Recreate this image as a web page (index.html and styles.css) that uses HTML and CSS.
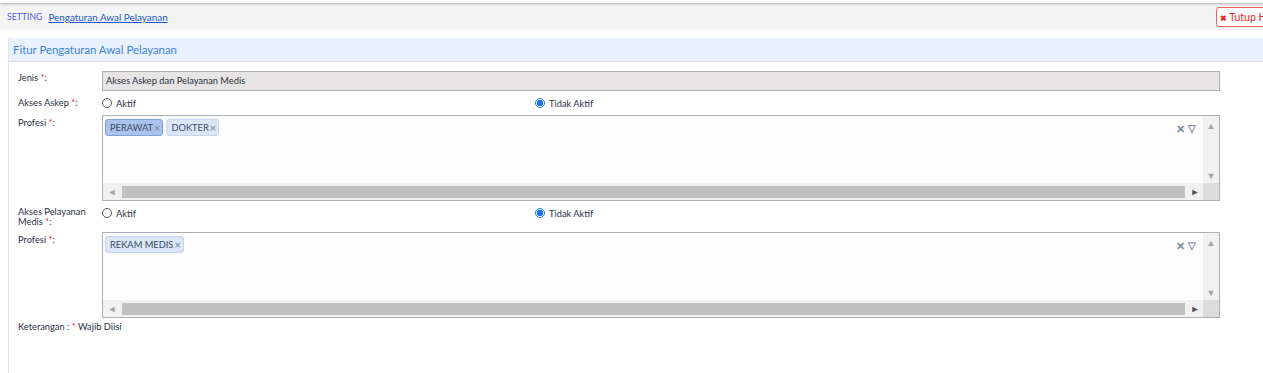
FILE: index.html
```html
<!DOCTYPE html>
<html lang="id">
<head>
  <meta charset="UTF-8">
  <title>Pengaturan Awal Pelayanan</title>
  <link rel="stylesheet" href="styles.css">
</head>
<body>
<div class="page">
  <div class="topline"></div>

  <div class="crumbs">
    <span class="crumb-root">SETTING</span>
    <a class="crumb-link" href="#">Pengaturan Awal Pelayanan</a>
    <button class="btn-close"><span class="ico">✖</span>Tutup Halaman</button>
  </div>

  <section class="panel">
    <h2 class="panel-title">Fitur Pengaturan Awal Pelayanan</h2>

    <div class="form">
      <label class="lbl">Jenis <span class="req">*</span>:</label>
      <div class="input-ro">Akses Askep dan Pelayanan Medis</div>

      <label class="lbl">Akses Askep <span class="req">*</span>:</label>
      <div class="radios">
        <span class="opt"><span class="radio"></span>Aktif</span>
        <span class="opt"><span class="radio on"></span>Tidak Aktif</span>
      </div>

      <label class="lbl lbl-box">Profesi <span class="req">*</span>:</label>
      <div class="multi">
        <div class="multi-body">
          <span class="tag active">PERAWAT<span class="tag-x">×</span></span>
          <span class="tag">DOKTER<span class="tag-x">×</span></span>
          <span class="multi-tools"><span class="clr">✕</span><span class="drop">▽</span></span>
        </div>
        <div class="vscroll"><span>▲</span><span>▼</span></div>
        <div class="hscroll"><span class="arr">◄</span><span class="thumb"></span><span class="arr">►</span></div>
        <div class="corner"></div>
      </div>

      <label class="lbl lbl-two">Akses Pelayanan<br>Medis <span class="req">*</span>:</label>
      <div class="radios">
        <span class="opt"><span class="radio"></span>Aktif</span>
        <span class="opt"><span class="radio on"></span>Tidak Aktif</span>
      </div>

      <label class="lbl lbl-box">Profesi <span class="req">*</span>:</label>
      <div class="multi">
        <div class="multi-body">
          <span class="tag">REKAM MEDIS<span class="tag-x">×</span></span>
          <span class="multi-tools"><span class="clr">✕</span><span class="drop">▽</span></span>
        </div>
        <div class="vscroll"><span>▲</span><span>▼</span></div>
        <div class="hscroll"><span class="arr">◄</span><span class="thumb"></span><span class="arr">►</span></div>
        <div class="corner"></div>
      </div>
    </div>

    <p class="note">Keterangan : <span class="req">*</span> Wajib Diisi</p>
  </section>
</div>
</body>
</html>
```

FILE: styles.css
```css
:root {
  --text: #2b3040;
  --blue: #3d84dd;
  --line: #aab1b9;
  --req: #e52222;
}
* { box-sizing: border-box; }
html, body { overflow: hidden; }
body {
  margin: 0;
  background: #fff;
  font-family: Lato, "Open Sans", sans-serif;
  font-size: 9.3px;
  color: var(--text);
}
.page { width: 1314px; height: 373px; }

.topline {
  height: 3px;
  background: #fff;
  box-shadow: 0 1px 3px rgba(0,0,0,.28);
  position: relative;
  z-index: 1;
}

/* breadcrumb */
.crumbs {
  display: flex;
  align-items: center;
  height: 27px;
  padding: 0 8px 0 7px;
  background: #f4f4f4;
}
.crumb-root { color: #4b5ee0; font-size: 8.7px; }
.crumb-link {
  margin-left: 6px;
  color: #2155c9;
  font-size: 9.9px;
  text-decoration: underline;
}
.btn-close {
  margin-left: auto;
  height: 20px;
  padding: 0 6px 0 3px;
  border: 1px solid #f45b5b;
  border-radius: 3px;
  background: #fff;
  color: #e82626;
  font-family: Lato, sans-serif;
  font-size: 10.5px;
}
.btn-close .ico { font-size: 8px; font-weight: 700; margin-right: 2px; }

/* panel */
.panel {
  margin: 8px 0 0 8px;
  border-left: 1px solid #dfe4ea;
  height: 335px;
}
.panel-title {
  margin: 0;
  height: 24px;
  line-height: 23px;
  padding-left: 4px;
  background: #e8f1fd;
  border-bottom: 1px solid #d7e1ee;
  color: var(--blue);
  font-size: 11.4px;
  font-weight: 400;
}

.form {
  display: grid;
  grid-template-columns: 84px 1118px;
  row-gap: 5px;
  padding: 9px 0 0 9px;
}
.lbl { line-height: 12px; padding-top: 1px; }
.lbl-box { padding-top: 2px; }
.lbl-two { line-height: 10px; padding-top: 1px; }
.req { color: var(--req); }

.input-ro {
  height: 20px;
  line-height: 18px;
  padding-left: 3px;
  background: #e6e4e4;
  border: 1px solid var(--line);
}

.radios { display: flex; height: 14px; align-items: center; }
.opt { display: flex; align-items: center; width: 433px; }
.radio {
  width: 10px; height: 10px;
  margin-right: 4px;
  border: 1px solid #555;
  border-radius: 50%;
  background: #fff;
}
.radio.on {
  border: 1px solid #1a73e8;
  background: radial-gradient(circle, #1a73e8 0 3px, #fff 3.3px);
}

/* multiselect */
.multi {
  display: grid;
  grid-template-columns: 1fr 16px;
  grid-template-rows: 1fr 17px;
  height: 86px;
  border: 1px solid var(--line);
  background: #fdfdfd;
}
.multi-body {
  display: flex;
  align-items: flex-start;
  gap: 3px;
  padding: 3px 2px;
}
.tag {
  display: flex;
  align-items: center;
  height: 17px;
  padding: 0 2px 0 4px;
  background: #dbe6f7;
  border: 1px solid #c6d6ef;
  border-radius: 3px;
  color: #3a4a68;
}
.tag.active { background: #a9c3ec; border-color: #7da1d9; }
.tag-x { color: #8a94a6; font-size: 11px; font-weight: 700; margin-left: 1px; }
.multi-tools {
  margin: 4px 5px 0 auto;
  display: flex;
  gap: 3px;
  color: #7f8ba0;
  font-size: 11px;
  line-height: 11px;
}
.clr { font-weight: 700; }
.drop { font-size: 10px; font-weight: 700; }
.vscroll, .hscroll { background: #f1f1f1; color: #a3a3a3; }
.vscroll {
  display: flex;
  flex-direction: column;
  justify-content: space-between;
  align-items: center;
  padding: 4px 0 2px;
  font-size: 9px;
}
.hscroll {
  display: flex;
  align-items: center;
  padding: 0 2px 0 3px;
  font-size: 9px;
}
.hscroll .arr { color: #505050; width: 12px; text-align: center; }
.hscroll .arr:first-child { color: #a3a3a3; }
.thumb { flex: 1; height: 12px; background: #c1c1c1; margin: 0 4px; }
.corner { background: #dcdcdc; }

.note { margin: 3px 0 0 9px; }
```
